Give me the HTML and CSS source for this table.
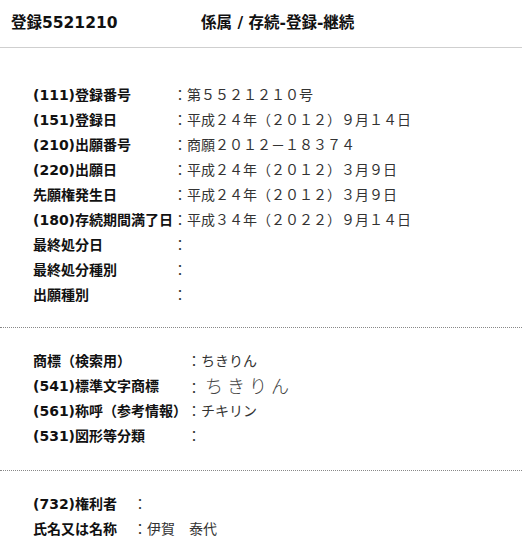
FILE: index.html
```html
<!DOCTYPE html>
<html lang="ja">
<head>
<meta charset="utf-8">
<title>登録5521210</title>
<link rel="stylesheet" href="styles.css">
</head>
<body>
<header class="head">
  <span class="head-no">登録5521210</span>
  <span class="head-status">係属 / 存続-登録-継続</span>
</header>

<section class="sec sec-first">
  <dl class="grid">
    <dt>(111)登録番号</dt><dd>：第５５２１２１０号</dd>
    <dt>(151)登録日</dt><dd>：平成２４年（２０１２）９月１４日</dd>
    <dt>(210)出願番号</dt><dd>：商願２０１２－１８３７４</dd>
    <dt>(220)出願日</dt><dd>：平成２４年（２０１２）３月９日</dd>
    <dt>先願権発生日</dt><dd>：平成２４年（２０１２）３月９日</dd>
    <dt>(180)存続期間満了日</dt><dd>：平成３４年（２０２２）９月１４日</dd>
    <dt>最終処分日</dt><dd>：</dd>
    <dt>最終処分種別</dt><dd>：</dd>
    <dt>出願種別</dt><dd>：</dd>
  </dl>
</section>

<section class="sec sec-second">
  <dl class="grid">
    <dt>商標（検索用）</dt><dd>：ちきりん</dd>
    <dt>(541)標準文字商標</dt><dd>：<span class="std-mark">ちきりん</span></dd>
    <dt>(561)称呼（参考情報）</dt><dd>：チキリン</dd>
    <dt>(531)図形等分類</dt><dd>：</dd>
  </dl>
</section>

<section class="sec sec-last">
  <dl class="grid">
    <dt>(732)権利者</dt><dd>：</dd>
    <dt>氏名又は名称</dt><dd>：伊賀　泰代</dd>
  </dl>
</section>
</body>
</html>
```

FILE: styles.css
```css
html, body {
  margin: 0;
  padding: 0;
  background: #fff;
}

body {
  font-family: "DejaVu Sans", "Noto Sans CJK JP", sans-serif;
  font-size: 14px;
  color: #333;
}

.head {
  display: flex;
  align-items: center;
  height: 48px;
  box-sizing: border-box;
  padding: 0 0 6px 11px;
  border-bottom: 1px solid #cfcfcf;
  font-size: 15.5px;
  font-weight: bold;
  color: #111;
}

.head-no {
  width: 190px;
}

.sec {
  border-bottom: 1px dotted #888;
  padding: 19px 0 21px 33px;
}

.sec-first {
  padding-top: 33px;
}

.sec-second {
  padding-bottom: 23px;
}

.sec-last {
  border-bottom: none;
}

.grid {
  display: grid;
  grid-template-columns: minmax(100px, max-content) 1fr;
  grid-auto-rows: 25px;
  margin: 0;
  align-items: center;
}

.grid dt {
  font-weight: bold;
  color: #111;
  white-space: nowrap;
}

.grid dd {
  margin: 0;
  font-family: "Noto Sans CJK JP", sans-serif;
  white-space: nowrap;
}

.std-mark {
  margin-left: 4px;
  font-size: 18px;
  font-weight: 300;
  letter-spacing: 4px;
  color: #444;
}
```
